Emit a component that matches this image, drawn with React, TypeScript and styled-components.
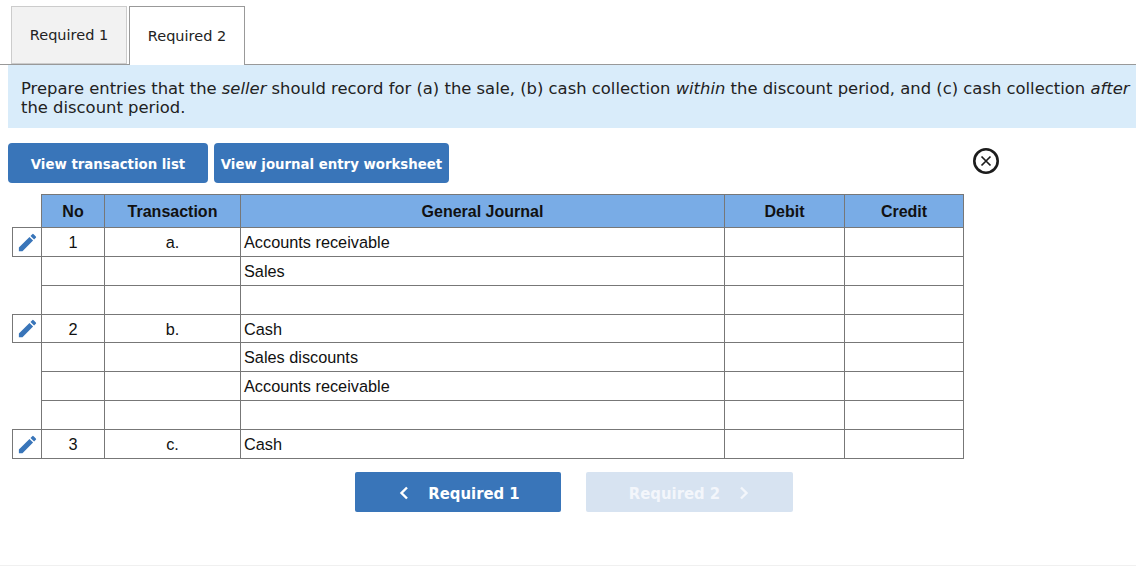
import React from "react";
import styled, { createGlobalStyle } from "styled-components";
import { MdEdit } from "react-icons/md";

const GlobalStyle = createGlobalStyle`
  html, body {
    margin: 0;
    padding: 0;
    background: #fff;
  }
`;

const Page = styled.div`
  width: 1136px;
  height: 566px;
  box-sizing: border-box;
  padding-top: 6px;
  border-bottom: 1px solid #f0f0f0;
  font-family: "DejaVu Sans", Verdana, sans-serif;
  color: #222;
`;

const TabBar = styled.div`
  display: flex;
  gap: 2px;
  height: 59px;
  box-sizing: border-box;
  padding-left: 11px;
  border-bottom: 1px solid #999;
`;

const Tab = styled.div<{ $active?: boolean }>`
  width: 116px;
  height: ${(p) => (p.$active ? 59 : 58)}px;
  box-sizing: border-box;
  display: flex;
  align-items: center;
  justify-content: center;
  font-size: 14.5px;
  border: 1px solid ${(p) => (p.$active ? "#999" : "#ccc")};
  border-bottom: ${(p) => (p.$active ? "none" : "1px solid #ccc")};
  background: ${(p) => (p.$active ? "#fff" : "#f2f2f2")};
`;

const Prompt = styled.div`
  margin-left: 8px;
  height: 63px;
  box-sizing: border-box;
  padding: 14px 0 0 13px;
  background: #d9ecfa;
  font-size: 16.4px;
  line-height: 19px;
  white-space: nowrap;
`;

const Toolbar = styled.div`
  display: flex;
  align-items: flex-start;
  gap: 6px;
  padding: 15px 0 0 8px;
  height: 66px;
  box-sizing: border-box;
`;

const ViewButton = styled.div<{ $w: number }>`
  width: ${(p) => p.$w}px;
  height: 40px;
  display: flex;
  align-items: center;
  justify-content: center;
  border-radius: 4px;
  background: #3975b9;
  color: #fff;
  font-family: "DejaVu Sans Condensed", "DejaVu Sans", sans-serif;
  font-size: 14.8px;
  font-weight: 700;
  white-space: nowrap;
`;

const CloseIcon = styled.svg`
  width: 28px;
  height: 28px;
  margin: 4px 0 0 517px;
`;

const Journal = styled.table`
  margin-left: 12px;
  border-collapse: collapse;
  table-layout: fixed;
  width: 951px;
  font-family: "Liberation Sans", Arial, sans-serif;
  font-size: 16.3px;
  color: #111;
`;

const HeadCell = styled.th`
  height: 33px;
  padding: 2px 0 0;
  box-sizing: border-box;
  border: 1px solid #777;
  background: #79ace6;
  font-size: 16px;
  font-weight: 700;
  text-align: center;
`;

const Row = styled.tr<{ $short?: boolean }>`
  height: ${(p) => (p.$short ? 28 : 29)}px;
`;

const Cell = styled.td<{ $center?: boolean; $short?: boolean }>`
  padding: ${(p) => (p.$short ? 2 : 0)}px 0 0 ${(p) => (p.$center ? 0 : 3)}px;
  box-sizing: border-box;
  border: 1px solid #777;
  text-align: ${(p) => (p.$center ? "center" : "left")};
  white-space: nowrap;
`;

const EditCell = styled.td<{ $on: boolean }>`
  padding: 0;
  box-sizing: border-box;
  text-align: center;
  vertical-align: middle;
  border: ${(p) => (p.$on ? "1px solid #777" : "none")};
  color: #3975b9;
  font-size: 23px;
  line-height: 0;
`;

const Spacer = styled.th`
  border: none;
  padding: 0;
`;

const Pager = styled.div`
  display: flex;
  gap: 25px;
  padding: 13px 0 0 355px;
`;

const PagerButton = styled.div<{ $off?: boolean; $w: number }>`
  width: ${(p) => p.$w}px;
  height: 40px;
  box-sizing: border-box;
  padding: 2px 0 0 ${(p) => (p.$off ? 0 : 2)}px;
  display: flex;
  align-items: center;
  justify-content: center;
  gap: 18px;
  border-radius: 2px;
  background: ${(p) => (p.$off ? "#d7e3f1" : "#3975b9")};
  color: ${(p) => (p.$off ? "#f3f6fb" : "#fff")};
  font-family: "DejaVu Sans Condensed", "DejaVu Sans", sans-serif;
  font-size: 16.5px;
  font-weight: 700;
`;

const Chevron = styled.svg`
  width: 12px;
  height: 14px;
  fill: none;
  stroke: currentColor;
  stroke-width: 2.4;
`;

const rows = [
  { no: "1", tx: "a.", text: "Accounts receivable" },
  { no: "", tx: "", text: "Sales" },
  { no: "", tx: "", text: "" },
  { no: "2", tx: "b.", text: "Cash" },
  { no: "", tx: "", text: "Sales discounts" },
  { no: "", tx: "", text: "Accounts receivable" },
  { no: "", tx: "", text: "" },
  { no: "3", tx: "c.", text: "Cash" },
];

export default function App() {
  return (
    <Page>
      <GlobalStyle />
      <TabBar>
        <Tab>Required 1</Tab>
        <Tab $active>Required 2</Tab>
      </TabBar>
      <Prompt>
        Prepare entries that the <em>seller</em> should record for (a) the sale, (b) cash
        collection <em>within</em> the discount period, and (c) cash collection <em>after</em>
        <br />
        the discount period.
      </Prompt>
      <Toolbar>
        <ViewButton $w={200}>View transaction list</ViewButton>
        <ViewButton $w={235}>View journal entry worksheet</ViewButton>
        <CloseIcon viewBox="0 0 28 28">
          <circle cx="14" cy="14" r="11.7" fill="none" stroke="#1c1c1c" strokeWidth="2.6" />
          <path d="M9.5 9.5 L18.5 18.5 M18.5 9.5 L9.5 18.5" stroke="#1c1c1c" strokeWidth="1.7" />
        </CloseIcon>
      </Toolbar>
      <Journal>
        <colgroup>
          <col style={{ width: 29 }} />
          <col style={{ width: 63 }} />
          <col style={{ width: 136 }} />
          <col style={{ width: 484 }} />
          <col style={{ width: 120 }} />
          <col style={{ width: 119 }} />
        </colgroup>
        <thead>
          <tr>
            <Spacer />
            <HeadCell>No</HeadCell>
            <HeadCell>Transaction</HeadCell>
            <HeadCell>General Journal</HeadCell>
            <HeadCell>Debit</HeadCell>
            <HeadCell>Credit</HeadCell>
          </tr>
        </thead>
        <tbody>
          {rows.map((r, i) => (
            <Row key={i} $short={i === 3}>
              <EditCell $on={r.no !== ""}>{r.no !== "" && <MdEdit />}</EditCell>
              <Cell $center $short={i === 3}>{r.no}</Cell>
              <Cell $center $short={i === 3}>{r.tx}</Cell>
              <Cell $short={i === 3}>{r.text}</Cell>
              <Cell />
              <Cell />
            </Row>
          ))}
        </tbody>
      </Journal>
      <Pager>
        <PagerButton $w={206}>
          <Chevron viewBox="0 0 12 14">
            <path d="M9 1.5 L3.5 7 L9 12.5" />
          </Chevron>
          Required 1
        </PagerButton>
        <PagerButton $off $w={207}>
          Required 2
          <Chevron viewBox="0 0 12 14">
            <path d="M3 1.5 L8.5 7 L3 12.5" />
          </Chevron>
        </PagerButton>
      </Pager>
    </Page>
  );
}
